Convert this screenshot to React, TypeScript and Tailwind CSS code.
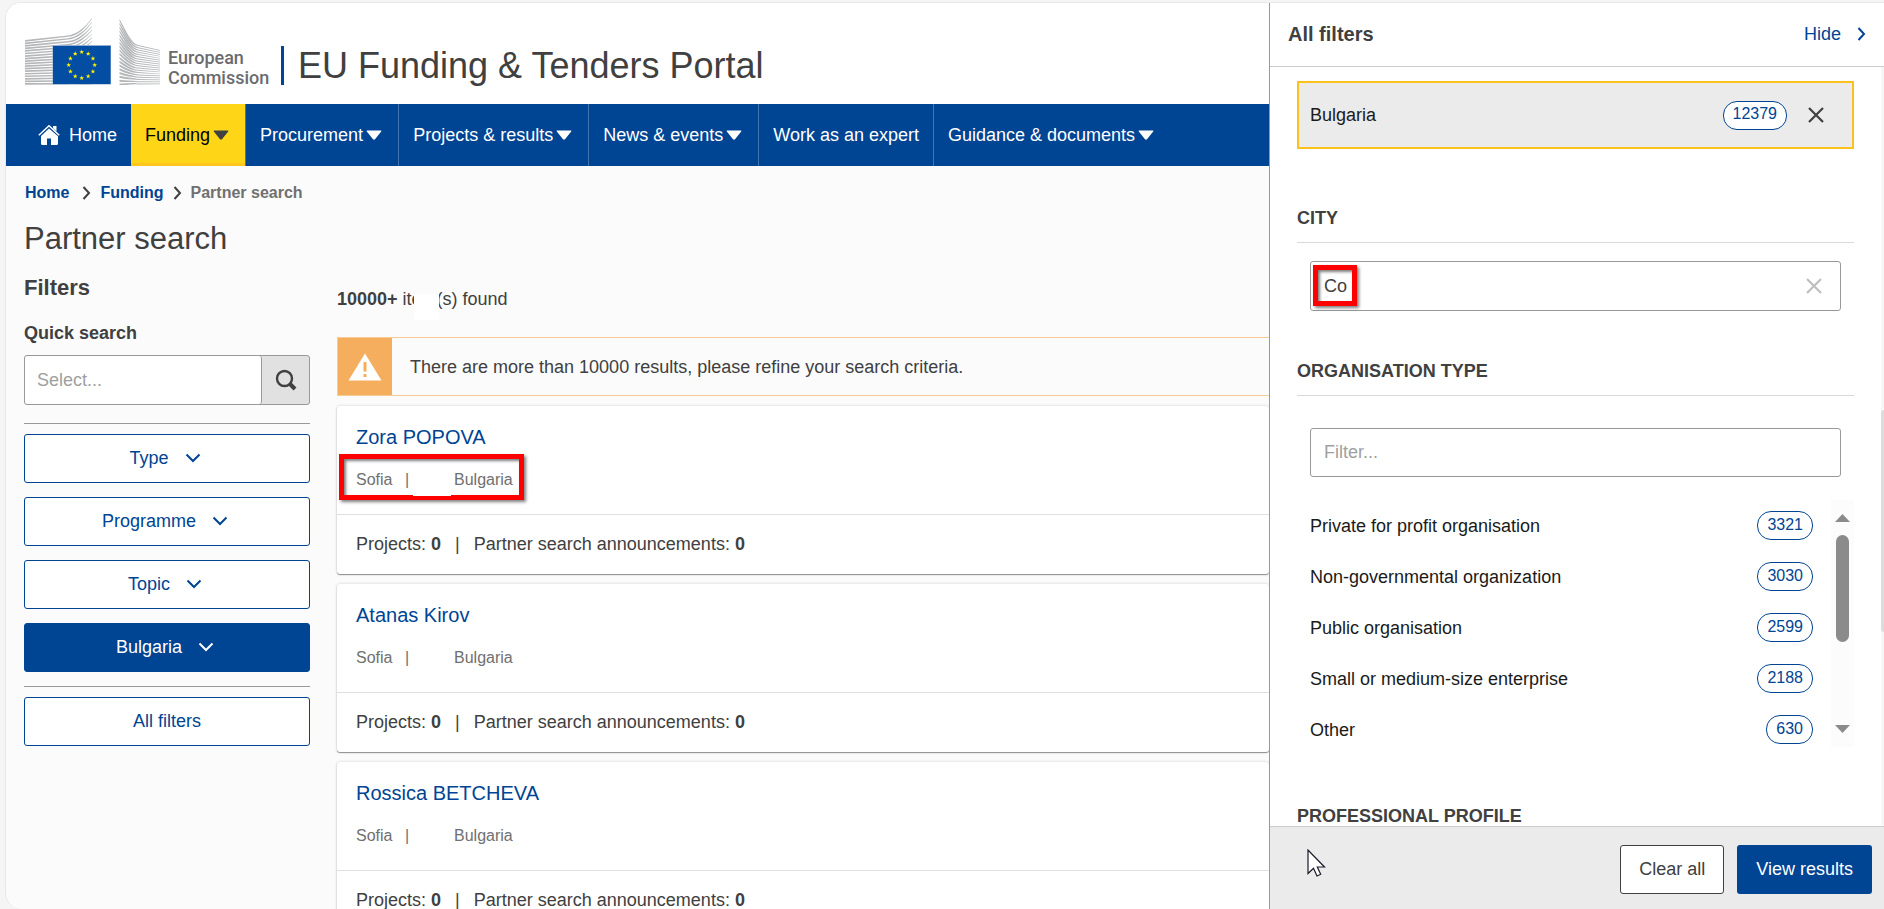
import React from 'react';

const navItems = [
  { label: 'Funding', menu: true, active: true },
  { label: 'Procurement', menu: true },
  { label: 'Projects & results', menu: true },
  { label: 'News & events', menu: true },
  { label: 'Work as an expert', menu: false },
  { label: 'Guidance & documents', menu: true },
];

const people = ['Zora POPOVA', 'Atanas Kirov', 'Rossica BETCHEVA'];

const organisationTypes = [
  { label: 'Private for profit organisation', count: 3321 },
  { label: 'Non-governmental organization', count: 3030 },
  { label: 'Public organisation', count: 2599 },
  { label: 'Small or medium-size enterprise', count: 2188 },
  { label: 'Other', count: 630 },
];

const lines = Array.from({ length: 18 }, (_, i) => i);
const starAngles = Array.from({ length: 12 }, (_, i) => i * 30);

const starPoints = (cx: number, cy: number, r: number) =>
  Array.from({ length: 10 }, (_, i) => {
    const a = (Math.PI / 5) * i - Math.PI / 2;
    const d = i % 2 === 0 ? r : r * 0.42;
    return `${(cx + d * Math.cos(a)).toFixed(2)},${(cy + d * Math.sin(a)).toFixed(2)}`;
  }).join(' ');

const CommissionLogo = () => (
  <svg width="136" height="67" viewBox="0 0 136 67" aria-hidden="true">
    <g fill="#b4b6b8">
      {/* left wing: thick at the outer edge, thin where it sweeps up */}
      {lines.map((i) => {
        const l = 22 + i * 2.53;
        const m = 17.5 + i * 2.8;
        const r = i * 3.85;
        return (
          <path
            key={i}
            d={`M0 ${l} L43 ${m} C52 ${m - 1} 60 ${r + 9 - i * 0.5} 67 ${r} L67 ${r + 0.7} C60 ${r + 10.4 - i * 0.5} 53 ${m + 0.5} 43 ${m + 1.3} L0 ${l + 1.7} Z`}
          />
        );
      })}
      {/* right wing */}
      {lines.map((i) => {
        const l = 1 + i * 3.79;
        const m = 27 + i * 2.26;
        const r = 32 + i * 1.97;
        return (
          <path
            key={i}
            d={`M94.500 ${l} C101 ${l + 12 - i * 0.7} 107 ${m - 1} 113 ${m} L135 ${r} L135 ${r + 0.7} L113 ${m + 1} C106 ${m + 0.5} 100 ${l + 14 - i * 0.7} 94.500 ${l + 2} Z`}
          />
        );
      })}
    </g>
    <rect x="27.500" y="27" width="58.500" height="39.500" fill="#8fb0d3" />
    <rect x="28" y="28" width="57.500" height="38" fill="#034ea2" />
    {starAngles.map((deg) => (
      <polygon
        key={deg}
        fill="#fff200"
        points={starPoints(
          56.7 + 13 * Math.sin((deg * Math.PI) / 180),
          47 - 13 * Math.cos((deg * Math.PI) / 180),
          2.5
        )}
      />
    ))}
  </svg>
);

const HomeIcon = () => (
  <svg width="22" height="22" viewBox="0 0 22 22" fill="currentColor" aria-hidden="true">
    <path d="M11 4.600 L3 12 V19.500 Q3 21 4.500 21 H9 V14.500 H13 V21 H18.500 Q20 21 20 19.500 V12.300 Z" />
    <path d="M.800 11.300 L11 1.800 L21.200 11.300" fill="none" stroke="currentColor" strokeWidth="1.500" />
    <path d="M15 2 H18.500 V7.500 L15 4.300 Z" />
  </svg>
);

const CaretIcon = () => (
  <svg width="21" height="10" viewBox="0 0 21 10" fill="currentColor" aria-hidden="true">
    <path d="M4 0.500 H18 Q18.800 .800 18 1.700 L12 9.300 Q11 10.200 10 9.300 L4 1.700 Q3.300 .800 4 .500 Z" />
  </svg>
);

const ChevronRight = () => (
  <svg width="9" height="16" viewBox="0 0 9 16" fill="none" stroke="currentColor" aria-hidden="true">
    <path d="M1.500 2 L7 8 L1.500 14" strokeWidth="2" />
  </svg>
);

const ChevronDown = () => (
  <svg className="mr-1" width="16" height="10" viewBox="0 0 16 10" fill="none" stroke="currentColor" aria-hidden="true">
    <path d="M1.500 1.500 L8 8 L14.500 1.500" strokeWidth="2" />
  </svg>
);

const CrossIcon = () => (
  <svg width="16" height="16" viewBox="0 0 16 16" fill="none" stroke="currentColor" aria-hidden="true">
    <path d="M1 1 L15 15 M15 1 L1 15" strokeWidth="2.200" />
  </svg>
);

const SearchIcon = () => (
  <svg width="22" height="22" viewBox="0 0 22 22" fill="none" stroke="currentColor" aria-hidden="true">
    <circle cx="9.500" cy="9.500" r="7.500" strokeWidth="2.400" />
    <path d="M14.500 14.500 L20 20" strokeWidth="4" />
  </svg>
);

const WarningIcon = () => (
  <svg width="34" height="28" viewBox="0 0 34 28" aria-hidden="true">
    <path d="M17 0.500 L33.500 27.500 H.500 Z" fill="#fff" />
    <path d="M15.500 9 H18.500 V18.500 H15.500 Z M15.500 21 H18.500 V24 H15.500 Z" fill="#f5ae5d" />
  </svg>
);

const FilterButton = ({ label, active = false, chevron = true }: { label: string; active?: boolean; chevron?: boolean }) => (
  <button
    className={`flex h-[49px] w-full items-center justify-center gap-4 rounded-[3px] border border-[#004494] pb-0.5 ${
      active ? 'bg-[#004494] text-white' : 'bg-white text-[#004494]'
    }`}
  >
    {label}
    {chevron && <ChevronDown />}
  </button>
);

const Count = ({ value }: { value: number }) => (
  <span className="flex h-[29px] items-center rounded-[14px] border border-[#004494] bg-white px-[9px] pb-0.5 text-base leading-6 text-[#004494]">
    {value}
  </span>
);

const SectionTitle = ({ children }: { children: React.ReactNode }) => (
  <h3 className="border-b border-[#d9d9d9] pb-3 font-bold leading-6 uppercase">{children}</h3>
);

const PersonCard = ({ name, marked }: { name: string; marked: boolean }) => (
  <article className="relative h-[168px] rounded-[3px] bg-white shadow-[0_0_3px_rgba(0,0,0,0.18),0_1px_1px_rgba(0,0,0,0.4)]">
    <div className="h-[109px] border-b border-[#e0e0e0] px-[19px] pt-[17px]">
      <a href="#" className="block text-xl leading-7 text-[#004494]">{name}</a>
      <div className="mt-[17px] flex text-base leading-6 text-[#707070]">
        <span className="w-[49px]">Sofia</span>
        <span className="w-[49px]">|</span>
        <span>Bulgaria</span>
      </div>
    </div>
    <p className="flex gap-[14px] px-[19px] pt-[17px] leading-6">
      <span>Projects: <b>0</b></span>
      <span>|</span>
      <span>Partner search announcements: <b>0</b></span>
    </p>
    {marked && (
      <div className="absolute left-0.5 top-12 h-[46px] w-[185px] border-[5px] border-[#fe0000] shadow-[2px_2px_3px_rgba(0,0,0,0.5),inset_2px_2px_3px_rgba(0,0,0,0.5)]">
        <div className="absolute -bottom-px left-[69px] h-5 w-[38px] bg-white" />
      </div>
    )}
  </article>
);

const Sidebar = () => (
  <aside className="w-[286px] shrink-0">
    <h2 className="text-[22px] font-bold leading-7">Filters</h2>
    <label htmlFor="quick-search" className="mt-[19px] block font-bold leading-6">Quick search</label>
    <div className="mt-2.5 flex h-[50px] rounded-[3px] border border-[#999] bg-[#e1e1e1]">
      <input
        id="quick-search"
        placeholder="Select..."
        className="min-w-0 flex-1 rounded-[3px] border-r border-[#999] bg-white px-3 placeholder:text-[#9f9f9f]"
      />
      <button aria-label="Search" className="flex w-[47px] items-center justify-center">
        <SearchIcon />
      </button>
    </div>
    <hr className="mt-[18px] mb-2.5 border-[#999]" />
    <div className="flex flex-col gap-3.5">
      <FilterButton label="Type" />
      <FilterButton label="Programme" />
      <FilterButton label="Topic" />
      <FilterButton label="Bulgaria" active />
    </div>
    <hr className="mt-3.5 mb-2.5 border-[#999]" />
    <FilterButton label="All filters" chevron={false} />
  </aside>
);

const Results = () => (
  <section className="min-w-0 flex-1 pt-[13px]">
    <p className="relative leading-6">
      <b>10000+</b> item(s) found
      <span className="absolute left-[77px] top-[7px] h-[26px] w-[25px] bg-white" />
    </p>
    <div className="mt-[26px] flex h-[59px] items-center border-y border-l border-[#f9cb94]">
      <div className="flex h-full w-[54px] items-center justify-center bg-[#f5ae5d]">
        <WarningIcon />
      </div>
      <p className="pl-[18px]">There are more than 10000 results, please refine your search criteria.</p>
    </div>
    <div className="mt-2.5 flex flex-col gap-2.5">
      {people.map((name, index) => (
        <PersonCard key={name} name={name} marked={index === 0} />
      ))}
    </div>
  </section>
);

const FiltersDrawer = () => (
  <aside className="relative flex w-[615px] shrink-0 flex-col border-l border-[#999] bg-white">
    <header className="flex h-16 shrink-0 items-center justify-between border-b border-[#ccc] px-[18px] pb-0.5">
      <h2 className="text-xl font-bold">All filters</h2>
      <button className="flex items-center gap-4 text-[#004494]">
        Hide
        <ChevronRight />
      </button>
    </header>

    <div className="flex min-h-0 flex-1">
      <div className="min-w-0 flex-1 overflow-hidden px-[27px] pt-3.5">
        <div className="flex h-[68px] items-center border-2 border-[#fbc11d] bg-[#ebebeb] pl-[11px] pr-7 text-[#1a1a1a]">
          <span className="flex-1">Bulgaria</span>
          <Count value={12379} />
          <button aria-label="Remove Bulgaria" className="ml-[21px] text-[#404040]"><CrossIcon /></button>
        </div>

        <div className="mt-[57px]">
          <SectionTitle><label htmlFor="city">City</label></SectionTitle>
          <div className="relative mx-[13px] mt-[18px] flex h-[50px] items-center rounded-[3px] border border-[#999] pr-[18px]">
            <input id="city" defaultValue="Co" className="h-full min-w-0 flex-1 px-[13px]" />
            <button aria-label="Clear city" className="text-[#bfbfbf]"><CrossIcon /></button>
            <div className="pointer-events-none absolute left-0.5 top-[3px] h-[41px] w-11 border-[5px] border-[#fe0000] shadow-[2px_2px_3px_rgba(0,0,0,0.5),inset_2px_2px_3px_rgba(0,0,0,0.5)]" />
          </div>
        </div>

        <div className="mt-12">
          <SectionTitle><label htmlFor="organisation">Organisation type</label></SectionTitle>
          <input
            id="organisation"
            placeholder="Filter..."
            className="mx-[13px] mt-8 block h-[49px] w-[calc(100%-26px)] rounded-[3px] border border-[#999] px-[13px] placeholder:text-[#9f9f9f]"
          />
          <div className="mt-[23px] flex h-[247px] overflow-hidden">
            <ul className="flex-1 pl-[13px] pr-[18px] text-[#1a1a1a]">
              {organisationTypes.map((type) => (
                <li key={type.label} className="flex h-[51px] items-center justify-between">
                  {type.label}
                  <Count value={type.count} />
                </li>
              ))}
            </ul>
            <div className="flex w-[23px] flex-col items-center bg-[#fcfcfc] py-3.5 text-[#8b8b8b]">
              <svg width="15" height="8" viewBox="0 0 15 8" fill="currentColor" aria-hidden="true"><path d="M0 8 L7.500 0 L15 8 Z" /></svg>
              <div className="mt-[13px] h-[107px] w-[13px] rounded-full bg-[#8b8b8b]" />
              <svg className="mt-auto" width="15" height="8" viewBox="0 0 15 8" fill="currentColor" aria-hidden="true"><path d="M0 0 L7.500 8 L15 0 Z" /></svg>
            </div>
          </div>
        </div>

        <div className="mt-[57px]">
          <SectionTitle>Professional profile</SectionTitle>
        </div>
      </div>
      <div className="w-[3px] bg-[#f7f7f7] pt-[343px]">
        <div className="h-[222px] rounded-l-sm bg-[#dcdcdc]" />
      </div>
    </div>

    <footer className="relative flex shrink-0 justify-end gap-[13px] border-t border-[#ccc] bg-[#ebebeb] px-3 pt-[18px] pb-[15px]">
      <button className="h-[49px] rounded-[3px] border border-[#404040] bg-white px-[18px] pb-0.5">Clear all</button>
      <button className="h-[49px] rounded-[3px] bg-[#004494] px-[19px] pb-0.5 text-white">View results</button>
      <svg className="absolute left-[37px] top-[22px]" width="19" height="28" viewBox="0 0 19 28" aria-hidden="true">
        <path d="M1 1 V24.500 L6.500 19.300 L10 27 L13.700 25.300 L10.300 18 H17.500 Z" fill="#fff" stroke="#1a1a2a" strokeWidth="1.200" />
      </svg>
    </footer>
  </aside>
);

const App = () => {
  return (
    <div className="h-screen overflow-hidden bg-[#f5f5f5] pl-[5px] pt-0.5 font-['Liberation_Sans',Arial,sans-serif] text-lg leading-6 text-[#404040]">
      <div className="flex h-full overflow-hidden rounded-l-2xl border-l border-t border-[#e8e8e8] bg-[#fbfbfb]">
        <div className="min-w-0 flex-1 overflow-hidden">
          <header className="flex h-[101px] bg-white pl-[19px] pt-[15px]">
            <CommissionLogo />
            <div className="mt-[30px] ml-[7px] w-[106px] font-['Roboto',sans-serif] text-lg font-medium leading-5 text-[#6a6b6d]">
              <div>European</div>
              <div>Commission</div>
            </div>
            <div className="ml-[7px] mt-7 h-[39px] w-[3px] shrink-0 bg-[#004494]" />
            <div className="ml-3.5 mt-7 whitespace-nowrap text-[36px] leading-10">EU Funding &amp; Tenders Portal</div>
          </header>

          <nav className="flex h-[62px] bg-[#004494] text-white">
            <a href="#" className="flex items-center gap-[9px] pl-8 pr-3.5"><HomeIcon />Home</a>
            {navItems.map((item) => (
              <a
                key={item.label}
                href="#"
                className={`flex items-center whitespace-nowrap px-3.5 ${
                  item.active ? 'border-b-[3px] border-[#ffc61d] bg-[#ffd617] pt-[3px] text-black' : 'border-l border-[#4073af]'
                }`}
              >
                {item.label}
                {item.menu && <span className={item.active ? 'text-[#404040]' : ''}><CaretIcon /></span>}
              </a>
            ))}
          </nav>

          <div className="pl-[18px]">
            <div className="flex items-center gap-[9px] pt-[15px] pl-px text-base font-bold leading-6">
              <a href="#" className="mr-1 text-[#004494]">Home</a>
              <ChevronRight />
              <a href="#" className="text-[#004494]">Funding</a>
              <ChevronRight />
              <span className="text-[#707070]">Partner search</span>
            </div>
            <h1 className="mt-4 text-[31px] leading-9">Partner search</h1>
            <div className="mt-[17px] flex gap-[27px]">
              <Sidebar />
              <Results />
            </div>
          </div>
        </div>
        <FiltersDrawer />
      </div>
    </div>
  );
};

export default App;
